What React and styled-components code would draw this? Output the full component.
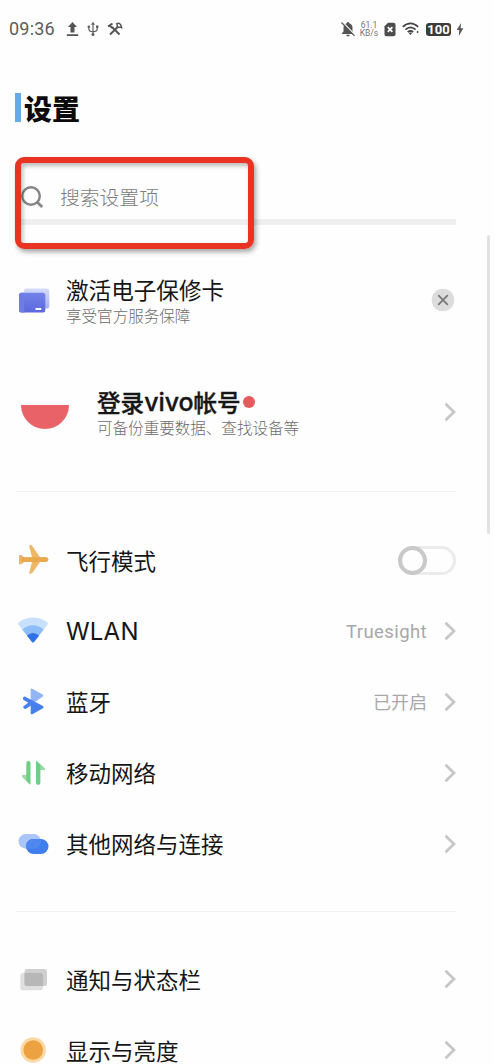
import React from 'react';
import styled, { createGlobalStyle } from 'styled-components';

const Global = createGlobalStyle`
  * { box-sizing: border-box; }
  html, body { margin: 0; background: #fefefe; overflow: hidden; }
  body { font-family: "Noto Sans CJK SC", sans-serif; color: #161616; }
  svg { display: block; flex: none; }
`;

const Screen = styled.div`
  position: relative;
  width: 494px;
  height: 1064px;
  overflow: hidden;
  background: #fefefe;
`;

const Spacer = styled.div`
  flex: none;
  width: ${(p) => p.$w || 0}px;
  height: ${(p) => p.$h || 0}px;
`;

const StatusBar = styled.header`
  display: flex;
  justify-content: space-between;
  height: 58px;
  padding: 0 30px 0 9px;
  color: #5c5c5c;
`;

const StatusGroup = styled.div`
  display: flex;
  align-items: center;
`;

const Clock = styled.span`
  width: 46px;
  margin-right: 11px;
  font: 400 18px/20px Roboto, sans-serif;
  letter-spacing: 0.2px;
  white-space: nowrap;
`;

const Speed = styled.span`
  width: 18px;
  margin: 0 6px 0 5px;
  font: 400 8.5px/8px Roboto, sans-serif;
  text-align: center;
  white-space: nowrap;
  display: flex;
  flex-direction: column;
  align-items: center;
  color: #777;
`;

const Battery = styled.span`
  width: 25px;
  height: 13px;
  margin: 1px 5px 0 7px;
  border-radius: 3px;
  background: #3c3c3c;
  color: #fff;
  font: 700 13px/13.5px Roboto, sans-serif;
  text-align: center;
`;

const TitleBar = styled.div`
  display: flex;
  align-items: center;
  height: 99px;
  padding-left: 15px;
`;

const Accent = styled.span`
  width: 6px;
  height: 29px;
  margin-right: 3px;
  background: #68aae8;
`;

const Title = styled.h1`
  margin: 0;
  font-size: 28px;
  line-height: 32px;
  font-weight: 900;
  color: #0b0b0b;
`;

const SearchBar = styled.div`
  display: flex;
  align-items: center;
  width: 440px;
  height: 68px;
  margin-left: 16px;
  padding: 18px 0 0 4px;
  border-bottom: 6px solid #efefef;
`;

const Placeholder = styled.span`
  margin-left: 16px;
  font-size: 19.8px;
  line-height: 24px;
  font-weight: 300;
  color: #7c7c7c;
`;

const Highlight = styled.div`
  position: absolute;
  left: 15px;
  top: 157px;
  width: 239px;
  height: 92px;
  border: 6px solid #ea3323;
  border-radius: 9px;
  box-shadow: 2px 3px 5px rgba(0, 0, 0, 0.35), inset 2px 3px 4px rgba(0, 0, 0, 0.26);
`;

const ScrollThumb = styled.div`
  position: absolute;
  left: 487px;
  top: 235px;
  width: 3px;
  height: 299px;
  border-radius: 2px;
  background: #e2e2e2;
`;

const Card = styled.div`
  display: flex;
  align-items: center;
  height: ${(p) => p.$height}px;
  padding: 0 ${(p) => p.$right}px 0 ${(p) => p.$left}px;
`;

const CardText = styled.div`
  display: flex;
  flex-direction: column;
  flex: 1;
  margin: 3px 0 0 ${(p) => p.$gap}px;
`;

const CardTitle = styled.div`
  display: flex;
  align-items: center;
  font-size: ${(p) => (p.$bold ? 23.6 : 22.6)}px;
  line-height: 28px;
  font-weight: ${(p) => (p.$bold ? 500 : 400)};
  -webkit-text-stroke: ${(p) => (p.$bold ? '0.35px' : '0')};
  white-space: nowrap;
`;

const CardNote = styled.div`
  font-size: 15.55px;
  line-height: 23px;
  font-weight: 300;
  color: #6c6c6c;
  white-space: nowrap;
`;

const Dot = styled.i`
  width: 12px;
  height: 12px;
  margin-left: 2px;
  border-radius: 50%;
  background: #e55a5d;
`;

const Divider = styled.hr`
  width: 440px;
  height: 1px;
  margin: 0 0 ${(p) => p.$after}px 16px;
  border: 0;
  background: #f1f1f1;
`;

const Row = styled.div`
  display: flex;
  align-items: center;
  height: 70.8px;
  padding: 0 38px 0 16px;
`;

const Label = styled.span`
  flex: 1;
  margin: -1px 0 0 16px;
  font-size: 22.5px;
  line-height: 26px;
  white-space: nowrap;
`;

const Latin = styled.span`
  font-family: ${(p) => p.$family || 'Inter'}, sans-serif;
  font-size: ${(p) => p.$size}px;
  font-weight: ${(p) => p.$weight || 'inherit'};
  letter-spacing: ${(p) => p.$track || 0}px;
`;

const Value = styled.span`
  margin: -1px 17px 0 0;
  font-size: 18px;
  line-height: 24px;
  font-weight: 400;
  color: #a8a8a8;
`;

const Toggle = styled.span`
  display: flex;
  width: 58px;
  height: 29px;
  border: 3px solid #ebebeb;
  border-radius: 15px;
`;

const Knob = styled.i`
  flex: none;
  width: 29px;
  height: 29px;
  margin: -3px 0 0 -3px;
  border: 4.5px solid #c9c9c9;
  border-radius: 50%;
  background: #fefefe;
`;

const Glyph = ({ children }) => (
  <svg width="34" height="34" viewBox="0 0 34 34">{children}</svg>
);

const Chevron = () => (
  <svg width="12" height="20" viewBox="0 0 12 20" fill="none" stroke="#c6c6c6" strokeWidth="2.7">
    <path d="M1.5 1.7 10 10 1.5 18.3" />
  </svg>
);

const PlaneIcon = () => (
  <Glyph>
    <path d="M13 2.6Q15.2 1.2 16.5 3.2L24 14.2H30Q32.3 14.6 32.3 16.6T30 19H24L16.5 29.8Q15 31.4 13 30.4L16 19H8L5.5 21.3H3V12H5.5L8 14.2H16Z" fill="#efb868" />
    <path d="M5 14.2H30Q32.3 14.6 32.3 16.6T30 19H5Z" fill="#e9a94e" />
  </Glyph>
);

const WlanIcon = () => (
  <Glyph>
    <path d="M2.4 10.5Q1.6 9 3 8Q17-.8 31 8Q32.4 9 31.6 10.5L18.2 27.7Q17 29.2 15.8 27.7Z" fill="#c9e0fa" />
    <path d="M6.3 15.4Q17 7.2 27.7 15.4L18.2 27.7Q17 29.2 15.8 27.7Z" fill="#8cbdf9" />
    <path d="M11 21.5Q17 16.5 23 21.5L18.2 27.7Q17 29.2 15.8 27.7Z" fill="#2f6fe8" />
  </Glyph>
);

const BluetoothIcon = () => (
  <Glyph>
    <path d="M14.7 4.6Q14.9 3 16.3 3.7L26.6 9.6Q28 10.7 26.6 11.8L18 17.5 14.7 16Z" fill="#94b5f5" />
    <path d="M8.8 11.6 27 21Q28.2 22 27 23.2L16.4 29.2Q14.8 29.8 14.7 28.3V20.8L9.4 24Q7.2 24.4 7.2 21.6L12.2 17.7 7.2 14.8Q6.4 12 8.8 11.6Z" fill="#477fed" />
  </Glyph>
);

const MobileIcon = () => (
  <Glyph>
    <path d="M10.3 7Q10.3 5 12.4 5T14.5 7V27.8Q14.5 29 13.5 28.2L6 20.5V19.3H10.3Z" fill="#70cd86" />
    <path d="M20 6Q20 4.4 21.3 5.4L29 12.7V14H24.4V26.8Q24.2 28.9 22.2 28.9T20 26.8Z" fill="#70cd86" />
    <path d="M6 19.3H10.3V24.8L6 20.5ZM24.4 8.4 29 12.7V14H24.4Z" fill="#9adba7" />
  </Glyph>
);

const LinkIcon = () => (
  <Glyph>
    <rect x="2.5" y="7" width="22.5" height="14.7" rx="7.3" fill="#a9c5f9" />
    <rect x="10" y="12" width="22.5" height="15" rx="7.5" fill="#407eed" />
    <path d="M17.5 12h6.6Q25 13 25 14.4Q24.5 21.7 17.7 21.7H10.7Q9.6 19.2 10.3 16.8Q12 12 17.5 12Z" fill="#4e88ef" />
  </Glyph>
);

const NoticeIcon = () => (
  <Glyph>
    <rect x="4.3" y="11" width="22.7" height="17.3" rx="2.5" fill="#dfdfdf" />
    <rect x="8.5" y="7" width="22.5" height="17" rx="2.5" fill="#cfcfcf" />
    <path d="M8.5 11H24.5Q27 11 27 13.5V24H11Q8.5 24 8.5 21.5Z" fill="#b7b7b7" />
  </Glyph>
);

const SunIcon = () => (
  <Glyph>
    <circle cx="17.2" cy="17" r="12.7" fill="#fad9a5" />
    <circle cx="17.2" cy="17" r="9.8" fill="#eca240" />
  </Glyph>
);

const WarrantyIcon = () => (
  <Glyph>
    <defs>
      <linearGradient id="cardBack" x1="0" y1="0" x2="0" y2="1">
        <stop offset="0" stopColor="#d5dbfa" />
        <stop offset="1" stopColor="#a7b0ef" />
      </linearGradient>
      <linearGradient id="cardFront" x1="0" y1="0" x2="0" y2="1">
        <stop offset="0" stopColor="#7483e8" />
        <stop offset="1" stopColor="#5b68df" />
      </linearGradient>
    </defs>
    <rect x="8" y="5.5" width="25.3" height="20" rx="2.5" fill="url(#cardBack)" />
    <rect x="3" y="9.7" width="26.3" height="19.8" rx="2.5" fill="url(#cardFront)" />
    <path d="M3 12.2Q3 9.7 5.5 9.7H8V25.5Q8 27 9 29.5H5.5Q3 29.5 3 27Z" fill="#6e7ce5" />
    <rect x="19.5" y="25" width="5.8" height="2" rx=".6" fill="#fff" />
  </Glyph>
);

const UploadIcon = () => (
  <svg width="13" height="16" viewBox="0 0 13 16" fill="#555">
    <path d="M6.5 1 11 6H8.5V11.5H4.5V6H2ZM.8 13.3H12.2V15H.8Z" />
  </svg>
);

const UsbIcon = () => (
  <svg width="12" height="16" viewBox="0 0 12 16" fill="none" stroke="#5f5f5f" strokeWidth="1.2">
    <path d="M6 3V13M1.8 5.5V8Q1.8 10.5 6 10.8M10.2 6V8Q10.2 10.5 6 10.8" />
    <path d="M6 .8 8 3.8H4Z" fill="#5f5f5f" stroke="none" />
    <circle cx="6" cy="13.5" r="1.5" fill="#5f5f5f" stroke="none" />
    <circle cx="1.8" cy="5.8" r="1.3" fill="#5f5f5f" stroke="none" />
    <path d="M9 4.5h2.4v2.4H9z" fill="#5f5f5f" stroke="none" />
  </svg>
);

const ToolsIcon = () => (
  <svg width="16" height="14" viewBox="0 0 16 14" fill="none" stroke="#555">
    <path d="M5 5 12.5 12.5" strokeWidth="1.9" />
    <path d="M3 12.5 11 4.8" strokeWidth="1.9" />
    <path d="M1 4.5 5.5 1.5M2.3 3.5 5.5 6" strokeWidth="2" />
    <path d="M9.2 2.2Q12-.2 13.8 3L15 6.5M10 2.5 10.5 5.2 14 5" strokeWidth="1.5" />
  </svg>
);

const MutedIcon = () => (
  <svg width="14" height="16" viewBox="0 0 14 16">
    <path d="M7 1Q8.2 1 8.3 2.2Q11.5 3.3 11.5 7V10.5L13 12.3V13H1V12.3L2.5 10.5V7Q2.5 3.3 5.7 2.2Q5.8 1 7 1ZM5.2 13.8H8.8Q8.5 15.4 7 15.4T5.2 13.8Z" fill="#555" />
    <path d="M1.2 .8 14 14" stroke="#fefefe" strokeWidth="1.3" />
    <path d="M.5 1.5 13.5 14.8" stroke="#555" strokeWidth="1.2" />
  </svg>
);

const SimIcon = () => (
  <svg width="12" height="15" viewBox="0 0 12 15">
    <path d="M4 .8H9.5Q11.5.8 11.5 2.8V12.2Q11.5 14.2 9.5 14.2H2.5Q.5 14.2.5 12.2V4.3Z" fill="#4d4d4d" />
    <path d="m3.8 5.2 4.6 4.6m0-4.6L3.8 9.8" stroke="#fff" strokeWidth="1.7" />
  </svg>
);

const SignalIcon = () => (
  <svg width="17" height="14" viewBox="0 0 17 14" fill="none" stroke="#444" strokeWidth="1.7">
    <path d="M.8 4.8Q8.5-2.2 16.2 4.8M3.4 7.7Q8.5 3.1 13.6 7.7M5.8 10.2Q8.5 7.8 11.2 10.2" />
    <path d="M6.8 11.1Q8.5 9.9 10.2 11.1L8.5 13Z" fill="#444" stroke="none" />
    <circle cx="15.6" cy="10" r=".9" fill="#444" stroke="none" />
  </svg>
);

const BoltIcon = () => (
  <svg width="8" height="13" viewBox="0 0 8 13" fill="#555">
    <path d="M5 0 .7 7H3.3L2.8 13 7.4 5.3H4.6Z" />
  </svg>
);

const SearchIcon = () => (
  <svg width="24" height="24" viewBox="0 0 24 24" fill="none" stroke="#858585" strokeWidth="2.4">
    <circle cx="11" cy="11" r="8.8" />
    <path d="m17 17 5.2 5" strokeWidth="2.8" />
  </svg>
);

const CloseIcon = () => (
  <svg width="24" height="24" viewBox="0 0 24 24">
    <circle cx="12" cy="12" r="11.3" fill="#dcdcdc" />
    <path d="m7.2 7.2 9.6 9.6m0-9.6-9.6 9.6" stroke="#777" strokeWidth="1.7" />
  </svg>
);

const Avatar = () => (
  <svg width="50" height="50" viewBox="0 0 50 50">
    <path d="M1 18H49A24 24 0 0 1 1 18Z" fill="#e96268" />
  </svg>
);

export default function App() {
  return (
    <Screen>
      <Global />
      <StatusBar>
        <StatusGroup>
          <Clock>09:36</Clock>
          <UploadIcon />
          <Spacer $w={8} />
          <UsbIcon />
          <Spacer $w={8} />
          <ToolsIcon />
        </StatusGroup>
        <StatusGroup>
          <MutedIcon />
          <Speed><span>61.1</span><span>KB/s</span></Speed>
          <SimIcon />
          <Spacer $w={6} />
          <SignalIcon />
          <Battery>100</Battery>
          <BoltIcon />
        </StatusGroup>
      </StatusBar>
      <TitleBar>
        <Accent />
        <Title>设置</Title>
      </TitleBar>
      <SearchBar>
        <SearchIcon />
        <Placeholder>搜索设置项</Placeholder>
      </SearchBar>
      <Card $height={150} $left={16} $right={39}>
        <WarrantyIcon />
        <CardText $gap={16}>
          <CardTitle>激活电子保修卡</CardTitle>
          <CardNote>享受官方服务保障</CardNote>
        </CardText>
        <CloseIcon />
      </Card>
      <Card $height={74} $left={20} $right={38}>
        <Avatar />
        <CardText $gap={27}>
          <CardTitle $bold>登录<Latin $size={25} $track={-0.1}>vivo</Latin>帐号<Dot /></CardTitle>
          <CardNote>可备份重要数据、查找设备等</CardNote>
        </CardText>
        <Chevron />
      </Card>
      <Spacer $h={42} />
      <Divider $after={33} />
      <Row>
        <PlaneIcon />
        <Label>飞行模式</Label>
        <Toggle><Knob /></Toggle>
      </Row>
      <Row>
        <WlanIcon />
        <Label><Latin $size={24} $track={0.2}>WLAN</Latin></Label>
        <Value><Latin $size={18.5} $family="Roboto" $track={0.4}>Truesight</Latin></Value>
        <Chevron />
      </Row>
      <Row>
        <BluetoothIcon />
        <Label>蓝牙</Label>
        <Value>已开启</Value>
        <Chevron />
      </Row>
      <Row>
        <MobileIcon />
        <Label>移动网络</Label>
        <Chevron />
      </Row>
      <Row>
        <LinkIcon />
        <Label>其他网络与连接</Label>
        <Chevron />
      </Row>
      <Spacer $h={32} />
      <Divider $after={32} />
      <Row>
        <NoticeIcon />
        <Label>通知与状态栏</Label>
        <Chevron />
      </Row>
      <Row>
        <SunIcon />
        <Label>显示与亮度</Label>
        <Chevron />
      </Row>
      <Highlight />
      <ScrollThumb />
    </Screen>
  );
}
